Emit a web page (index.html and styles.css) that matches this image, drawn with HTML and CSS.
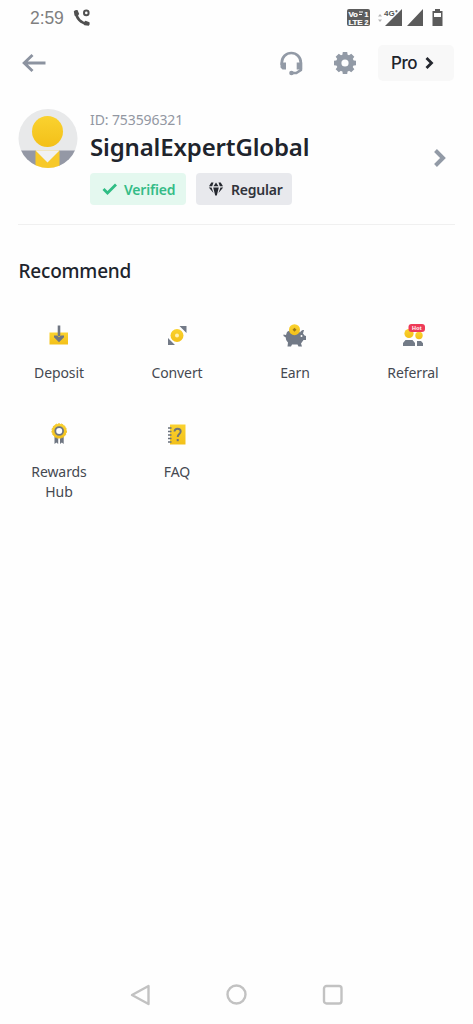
FILE: index.html
```html
<!DOCTYPE html>
<html lang="en">
<head>
<meta charset="utf-8">
<title>Account</title>
<link rel="stylesheet" href="styles.css">
</head>
<body>
<div class="screen">
  <div class="status">
    <span class="clock">2:59</span>
    <svg class="call" width="18" height="18" viewBox="0 0 18 18"><path d="M3.500 3.500C3 9 8 14.500 14.500 14.500" fill="none" stroke="#505050" stroke-width="2.600"/><path d="M.8 2.200Q2.500.6 4.500 1l1.700 4-2.500 3L1.500 6.500zM15.800 16.800Q17.200 15.500 16.500 13.300L12.500 11.700 9.500 14.200l2 2z" fill="#505050"/><circle cx="13.300" cy="3.900" r="2.300" fill="none" stroke="#505050" stroke-width="2"/></svg>
    <svg class="signals" width="98" height="22" viewBox="0 0 98 22">
      <rect x="0" y="3" width="23" height="17" rx="2" fill="#5d5d5d"/>
      <g fill="#fff" stroke="#fff" stroke-width=".2" font-family="Liberation Sans, sans-serif" font-weight="700" font-size="8"><text x="1.500" y="10.500" textLength="9.500">Vo</text><text x="1.500" y="18.500" textLength="14">LTE</text><text x="17.500" y="10.500" font-size="7">1</text><text x="17.500" y="18.500" font-size="7">2</text></g>
      <path d="M12 6h4M12 8.500h3" stroke="#fff"/>
      <path d="m31 10.500 2-2.500 2 2.500zm0 3 2 2.500 2-2.500z" fill="#b5b5b5"/>
      <path d="M55 3v17H38zM76 3v17H60z" fill="#5b5b5b"/>
      <text x="37" y="9.500" font-family="Liberation Sans, sans-serif" font-weight="700" font-size="8" fill="#555" stroke="#fff" stroke-width="1.500" paint-order="stroke">4G⁺</text>
      <path d="M88 3h5v2h2.500v15h-10V5H88z" fill="#5b5b5b"/><path d="M87 7h7v4h-7z" fill="#fff"/>
    </svg>
  </div>

  <div class="toolbar">
    <svg class="back" width="24" height="20" viewBox="0 0 24 20" fill="none" stroke="#8c93a0" stroke-width="2.900"><path d="M23.500 10H2M10.500 2 2.200 10l8.300 8"/></svg>
    <svg class="headset" width="26" height="26" viewBox="0 0 26 26" fill="#929aa6"><path d="M3.800 15v-2.500a9.500 9.500 0 0 1 19 0V20l-4.500 3h-5" fill="none" stroke="#929aa6" stroke-width="2.700"/><path d="M2.500 12.500H8v7H4.500l-2-2zM18.700 12.500h5.500v7h-5.500z"/><circle cx="13.500" cy="23" r="2.300"/></svg>
    <svg class="gear" width="24" height="24" viewBox="0 0 24 24"><g fill="#929aa6"><circle cx="12" cy="12" r="8.800"/><path id="tooth" d="M9.800 1h4.400l.6 4H9.200zM9.800 23h4.400l.6-4H9.200zM1 9.800v4.400l4 .6V9.200zM23 9.800v4.400l-4 .6V9.200z"/><use href="#tooth" transform="rotate(45 12 12)"/></g><circle cx="12" cy="12" r="3.600" fill="#fff"/></svg>
    <div class="pro"><span>Pro</span><svg width="10" height="14" viewBox="0 0 10 14" fill="none" stroke="#24272e" stroke-width="2.800"><path d="m1.500 2 5 5-5 5"/></svg></div>
  </div>

  <div class="profile">
    <svg class="avatar" width="60" height="60" viewBox="0 0 60 60">
      <defs><linearGradient id="gold" x1="0" y1="0" x2="0" y2="1"><stop offset="0" stop-color="#fad22f"/><stop offset="1" stop-color="#f3c019"/></linearGradient><clipPath id="round"><circle cx="30" cy="30.500" r="29.500"/></clipPath></defs>
      <g clip-path="url(#round)"><path d="M0 0h60v60H0z" fill="#e8e9ea"/><path d="M0 42.500h18V60H0zM41 42.500h19V60H41z" fill="#9498a5"/><path d="M17.500 42.500h24V60h-24z" fill="#f7c928"/><path d="M17.500 42.500 29.500 54.500l12-12z" fill="#f1f1f1"/><circle cx="29.500" cy="23.500" r="15.500" fill="url(#gold)"/></g>
    </svg>
    <div class="details">
      <div class="uid">ID: 753596321</div>
      <div class="name">SignalExpertGlobal</div>
      <div class="tags">
        <div class="tag verified"><svg width="16" height="14" viewBox="0 0 16 14" fill="none" stroke="#2fbd85" stroke-width="2.800"><path d="m1.500 7 4 4L14 2.500"/></svg><span>Verified</span></div>
        <div class="tag regular"><svg width="16" height="14" viewBox="0 0 16 14" fill="#25282f"><path d="M3.300.5h2.200L4.200 4.300H1zM12.700.5h-2.200l1.300 3.800H15zM8 .5 10.500 4.300h-5zM5.200 5.500h5.600L8.800 13.500H7.200zM.8 5.500h2.700L5.500 11zM15.200 5.500h-2.700L10.500 11z"/></svg><span>Regular</span></div>
      </div>
    </div>
    <svg class="more" width="14" height="20" viewBox="0 0 14 20" fill="none" stroke="#929aa6" stroke-width="4"><path d="m2.500 2.500 7.500 7.500-7.500 7.500"/></svg>
  </div>

  <h2 class="heading">Recommend</h2>
  <div class="grid">
    <div class="item"><svg width="24" height="24" viewBox="0 0 24 24"><path d="M2.500 8.500h18.500V20.500H2.500z" fill="url(#gold)"/><path d="M12 1.500V12" stroke="#6f7682" stroke-width="2.600"/><path d="M7 11.500h3l2 1.500 2-1.500h3v1.700l-5 5-5-5z" fill="#6f7682"/></svg><span>Deposit</span></div>
    <div class="item"><svg width="24" height="24" viewBox="0 0 24 24"><path d="M14.500 2H21.500V9zM3 14v7h7z" fill="#737a87"/><circle cx="12" cy="11.500" r="7.400" fill="#fff"/><circle cx="12" cy="11.500" r="6.500" fill="url(#gold)"/><circle cx="12" cy="11.500" r="2" fill="#fff1b2"/></svg><span>Convert</span></div>
    <div class="item"><svg width="24" height="24" viewBox="0 0 24 24"><path d="M4 8c4-3 10-3 13 .5 1-2 2.500-2.500 4-2.500l-1 3.500 1.500 2 1.500.5v4h-2.500l-2.500 3.500 1 3h-3.500l-1-2H9l-1 2H4.500l.5-4c-1.500-1.500-2.200-3-2.200-5L.5 12v-1.500L3 11z" fill="#717986"/><circle cx="11.500" cy="5.700" r="5.500" fill="url(#gold)"/><path d="m11.500 3.700 2 2-2 2-2-2z" fill="#98781b"/><circle cx="18.500" cy="12" r="1" fill="#fff"/></svg><span>Earn</span></div>
    <div class="item"><svg width="24" height="24" viewBox="0 0 24 24"><circle cx="8" cy="9.500" r="4.600" fill="url(#gold)"/><circle cx="18" cy="11.500" r="3.700" fill="url(#gold)"/><path d="M2 22v-3l2.500-3h7l2.500 3v3zM16 17h4l2 2.200V22h-6z" fill="#737b87"/><rect x="7.500" y="0" width="16.500" height="8" rx="3" fill="#ee3b58"/><text x="11" y="6" textLength="9.500" font-family="Liberation Sans, sans-serif" font-weight="700" font-size="5.500" fill="#fff">Hot</text></svg><span>Referral</span></div>
    <div class="item"><svg width="24" height="24" viewBox="0 0 24 24"><path d="M7.500 14h3.700v7l-1.800-1.500-1.900 1.500zM13 14h3.700v7l-1.900-1.500L13 21z" fill="#6f7682"/><circle cx="12.200" cy="8" r="7.300" fill="url(#gold)" stroke="#f3c52d" stroke-width="1" stroke-dasharray="2 1"/><circle cx="12.200" cy="8" r="3.900" fill="#fff" stroke="#6f7682" stroke-width="1.800"/></svg><span>Rewards<br>Hub</span></div>
    <div class="item"><svg width="24" height="24" viewBox="0 0 24 24"><path d="M5 1.500h15.500v20H5z" fill="url(#gold)"/><path d="M3 5h3.500M3 8.500h3.500M3 12h3.500M3 15.500h3.500M3 19h3.500" stroke="#69717d" stroke-width="1.500"/><path d="M9.500 8.500c.2-2 1.500-2.700 3-2.700 1.900 0 3.200 1 3.200 2.700 0 2.500-3 2.600-3 5.500" fill="none" stroke="#6f7377" stroke-width="1.900"/><path d="M11.700 16h2v2.200h-2z" fill="#6f7377"/></svg><span>FAQ</span></div>
  </div>

  <div class="nav">
    <svg width="22" height="22" viewBox="0 0 22 22"><path d="M18.500 2v18L2 11z"/></svg>
    <svg width="22" height="22" viewBox="0 0 22 22"><circle cx="10.500" cy="10.500" r="9"/></svg>
    <svg width="22" height="22" viewBox="0 0 22 22"><rect x="2" y="2" width="17.500" height="17.500" rx="2.500"/></svg>
  </div>
</div>
</body>
</html>
```
FILE: styles.css
```css
* { box-sizing: border-box; }
body { margin: 0; background: #fefefe; font-family: "Noto Sans", sans-serif; color: #20242c; }
svg { display: block; flex: none; }
.screen { width: 473px; height: 1024px; display: flex; flex-direction: column; }
.status { height: 36px; display: flex; align-items: center; padding: 0 28px 0 30px; }
.clock { width: 34px; font: 17.5px/36px "Liberation Sans", sans-serif; color: #808080; white-space: nowrap; letter-spacing: -.1px; }
.call { margin-left: 9px; }
.signals { margin-left: auto; margin-top: -2px; }
.toolbar { height: 54px; display: flex; align-items: center; padding: 0 19px 0 22px; }
.headset { margin-left: auto; }
.gear { margin-left: 29px; }
.pro { width: 76px; height: 36px; margin-left: 21px; padding-left: 13px; display: flex; align-items: center; gap: 8px; background: #f8f8f8; border-radius: 5px; font: 500 17px "Inter", sans-serif; letter-spacing: -.4px; }
.profile { height: 135px; margin: 0 18px; padding-top: 18px; display: flex; align-items: flex-start; border-bottom: 1px solid #f0f0f0; }
.details { margin-left: 12px; }
.uid { height: 22px; font-size: 14px; line-height: 23px; color: #9297a2; letter-spacing: -.1px; }
.name { height: 34px; font-size: 24px; font-weight: 600; line-height: 34px; letter-spacing: -.15px; white-space: nowrap; }
.tags { display: flex; gap: 10px; margin-top: 9px; }
.tag { width: 96px; height: 32px; display: flex; align-items: center; gap: 6px; padding-left: 12px; border-radius: 4px; font-size: 14px; font-weight: 600; letter-spacing: -.2px; }
.verified { background: #e4f8ef; color: #35bc87; }
.regular { background: #e8e9ed; color: #30333b; }
.regular span { margin-left: 1px; }
.more { margin: 40px 8px 0 auto; }
.heading { height: 28px; margin: 32px 0 0 18.500px; font-size: 19px; font-weight: 500; line-height: 28px; letter-spacing: -.2px; }
.grid { width: 472px; margin-top: 38px; display: grid; grid-template-columns: repeat(4, 118px); grid-auto-rows: 99px; }
.item { display: flex; flex-direction: column; align-items: center; gap: 15px; padding-top: 1px; text-align: center; font-size: 14px; line-height: 20px; letter-spacing: -.1px; color: #454951; }
.nav { margin-top: auto; height: 59px; display: flex; justify-content: center; align-items: center; gap: 74px; fill: none; stroke: #c2c2c2; stroke-width: 2.4; stroke-linejoin: round; }
```
